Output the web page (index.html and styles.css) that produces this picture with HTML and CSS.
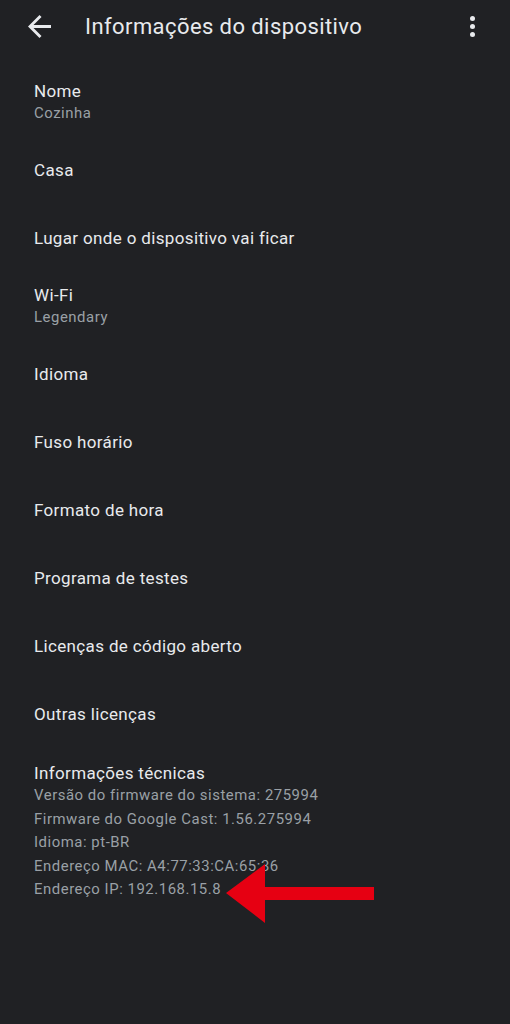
FILE: index.html
```html
<!DOCTYPE html>
<html lang="pt-BR">
<head>
  <meta charset="UTF-8">
  <meta name="viewport" content="width=device-width, initial-scale=1.0">
  <title>Informações do dispositivo</title>
  <link rel="stylesheet" href="styles.css">
</head>
<body>
  <!-- Toolbar -->
  <header class="toolbar">
    <svg class="back" viewBox="4 4 16 16" aria-hidden="true">
      <path d="M20 11H7.83l5.59-5.59L12 4l-8 8 8 8 1.41-1.41L7.83 13H20v-2z"/>
    </svg>
    <h1 class="title">Informações do dispositivo</h1>
    <div class="menu" aria-hidden="true">
      <span></span><span></span><span></span>
    </div>
  </header>

  <main class="list">
    <div class="item">
      <div class="item-title">Nome</div>
      <div class="item-sub">Cozinha</div>
    </div>
    <div class="item"><div class="item-title">Casa</div></div>
    <div class="item"><div class="item-title">Lugar onde o dispositivo vai ficar</div></div>
    <div class="item">
      <div class="item-title">Wi-Fi</div>
      <div class="item-sub">Legendary</div>
    </div>
    <div class="item"><div class="item-title">Idioma</div></div>
    <div class="item"><div class="item-title">Fuso horário</div></div>
    <div class="item"><div class="item-title">Formato de hora</div></div>
    <div class="item"><div class="item-title">Programa de testes</div></div>
    <div class="item"><div class="item-title">Licenças de código aberto</div></div>
    <div class="item"><div class="item-title">Outras licenças</div></div>

    <div class="tech">
      <div class="item-title">Informações técnicas</div>
      <div class="tech-line">Versão do firmware do sistema: 275994</div>
      <div class="tech-line">Firmware do Google Cast: 1.56.275994</div>
      <div class="tech-line">Idioma: pt-BR</div>
      <div class="tech-line">Endereço MAC: A4:77:33:CA:65:36</div>
      <div class="tech-line">Endereço IP: 192.168.15.8</div>
    </div>
  </main>

  <!-- red annotation arrow -->
  <svg class="pointer" viewBox="0 0 150 60" aria-hidden="true">
    <polygon points="0,29 39,0 39,23 148,23 148,36 39,36 39,59"/>
  </svg>
</body>
</html>
```

FILE: styles.css
```css
html, body {
  background-color: #202124;
}
body {
  margin: 0;
  font-family: Roboto, "Liberation Sans", sans-serif;
  color: #e8eaed;
  position: relative;
  min-height: 1024px;
}

/* Toolbar */
.toolbar {
  height: 52px;
  display: flex;
  align-items: center;
  padding: 0 0 0 28px;
}
.back {
  width: 23px;
  height: 23px;
  fill: #e8eaed;
  flex: none;
}
.title {
  margin: 0 0 0 34px;
  font-size: 22px;
  font-weight: 400;
  letter-spacing: 0.42px;
  flex: 1;
  line-height: 1;
  padding-top: 1px;
}
.menu {
  width: 5px;
  display: flex;
  flex-direction: column;
  gap: 3.4px;
  margin-right: 35px;
  margin-top: 1px;
}
.menu span {
  width: 5px;
  height: 5px;
  border-radius: 50%;
  background-color: #e8eaed;
}

/* List */
.list {
  padding-top: 16px;
}
.item {
  height: 68px;
  display: flex;
  flex-direction: column;
  justify-content: center;
  padding-left: 34px;
}
.item-title {
  font-size: 17px;
  line-height: 22px;
  letter-spacing: 0.35px;
}
.item-sub {
  font-size: 14.9px;
  line-height: 22px;
  letter-spacing: 0.54px;
  color: #9aa0a6;
}
.tech {
  padding: 14px 0 0 34px;
}
.tech-line {
  font-size: 14.9px;
  line-height: 23.5px;
  letter-spacing: 0.54px;
  color: #9aa0a6;
}

/* Annotation */
.pointer {
  position: absolute;
  left: 226px;
  top: 864px;
  width: 150px;
  height: 60px;
  fill: #e60012;
}
```
